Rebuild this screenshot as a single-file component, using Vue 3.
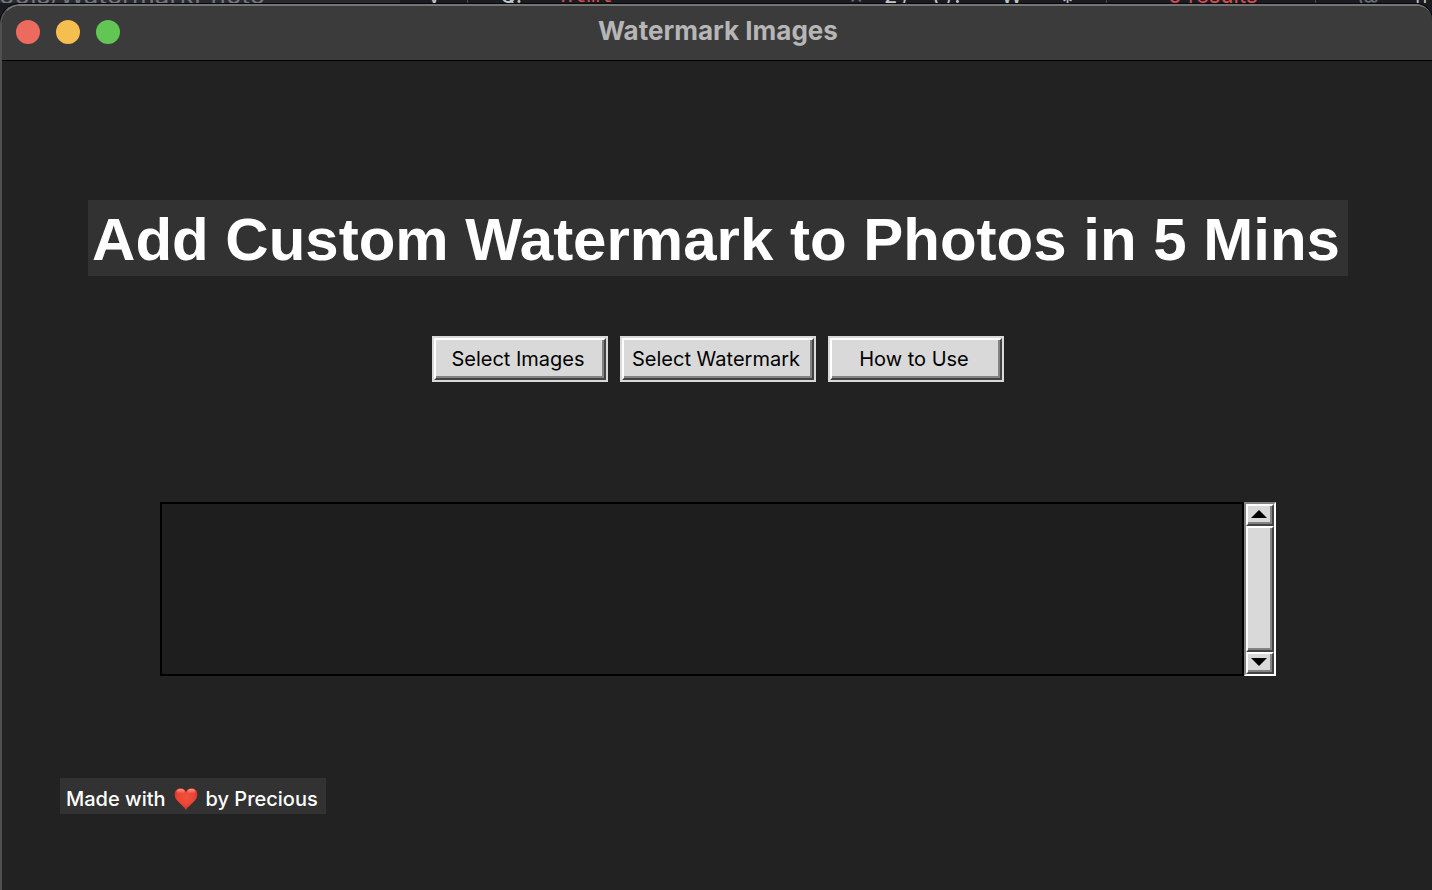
<script setup>
const lights = [
  { name: 'Close', kind: 'close' },
  { name: 'Minimize', kind: 'minimize' },
  { name: 'Zoom', kind: 'zoom' },
]
const actions = [
  { label: 'Select Images', wide: false },
  { label: 'Select Watermark', wide: true },
  { label: 'How to Use', wide: false },
]
</script>

<template>
  <div class="desktop">
    <div class="editor" aria-hidden="true">
      <span class="path">ools/WatermarkPhoto</span>
      <span class="glyph g1">y</span>
      <span class="rule r1"></span>
      <span class="glyph g2">Q.</span>
      <span class="red html">html</span>
      <span class="dim g3">×</span>
      <span class="glyph g4">2</span>
      <span class="glyph g5">/</span>
      <span class="glyph g6">( /:</span>
      <span class="glyph g7">W</span>
      <span class="glyph g8">*</span>
      <span class="rule r2"></span>
      <span class="red results">0 results</span>
      <span class="rule r3"></span>
      <span class="dim g9">@</span>
      <span class="glyph g10">||</span>
    </div>
    <div class="window">
      <header class="titlebar">
        <div class="lights">
          <button v-for="l in lights" :key="l.kind" type="button" class="light" :class="l.kind" :aria-label="l.name"></button>
        </div>
        <div class="title">Watermark Images</div>
      </header>
      <main class="content">
        <h1>Add Custom Watermark to Photos in 5 Mins</h1>
        <div class="actions">
          <button v-for="a in actions" :key="a.label" type="button" class="action" :class="{ wide: a.wide }">
            <span class="face">{{ a.label }}</span>
          </button>
        </div>
        <div class="list">
          <textarea class="files" aria-label="Selected files" readonly></textarea>
          <div class="scrollbar">
            <button type="button" class="arrow" aria-label="Scroll up">
              <svg width="16" height="8" viewBox="0 0 16 8"><path d="M8 0 16 8H0z" /></svg>
            </button>
            <div class="thumb"></div>
            <button type="button" class="arrow" aria-label="Scroll down">
              <svg width="16" height="8" viewBox="0 0 16 8"><path d="M0 0H16L8 8z" /></svg>
            </button>
          </div>
        </div>
        <footer class="credit">
          <span>Made with</span>
          <svg class="heart" role="img" aria-label="love" width="24" height="24" viewBox="0 0 24 24">
            <defs>
              <radialGradient id="heartFill" cx="0.5" cy="0.4" r="0.65">
                <stop offset="0" stop-color="#f2533e" />
                <stop offset="0.6" stop-color="#e94335" />
                <stop offset="1" stop-color="#c92a25" />
              </radialGradient>
              <linearGradient id="heartShine" x1="0" y1="0" x2="0" y2="1">
                <stop offset="0" stop-color="#ffb09a" stop-opacity="0.9" />
                <stop offset="1" stop-color="#ff8069" stop-opacity="0" />
              </linearGradient>
            </defs>
            <path fill="url(#heartFill)" d="M12 23C10.500 20.500 7.500 18 4.800 15.300C2.300 12.800.7 10.500.7 7.400C.7 3.700 3.200 1.300 6.400 1.300C9 1.300 11.100 2.700 12 5C12.900 2.700 15 1.300 17.600 1.300C20.800 1.300 23.300 3.700 23.300 7.400C23.300 10.500 21.700 12.800 19.200 15.300C16.500 18 13.500 20.500 12 23Z" />
            <ellipse cx="6.500" cy="4.500" rx="4" ry="2.500" fill="url(#heartShine)" />
            <ellipse cx="17.500" cy="4.500" rx="4" ry="2.500" fill="url(#heartShine)" />
          </svg>
          <span>by Precious</span>
        </footer>
      </main>
    </div>
  </div>
</template>

<style>
body {
  margin: 0;
  background: #1a1b20;
}
</style>

<style scoped>
.desktop {
  box-sizing: border-box;
  min-height: 100vh;
  position: relative;
  padding-top: 4px;
  display: flex;
  flex-direction: column;
  background: #1b1c21;
  font-family: Inter, "Liberation Sans", sans-serif;
  overflow: hidden;
}
.editor {
  position: absolute;
  inset: 0 0 auto 0;
  height: 3px;
  overflow: hidden;
  font-size: 22px;
  line-height: 20px;
  background: linear-gradient(to right, #282a30 400px, #1b1c21 400px);
}
.editor span {
  position: absolute;
  top: -15px;
  white-space: pre;
}
.path { left: -1px; color: #74767e; font-size: 26px; }
.glyph { color: #c4c5c9; }
.dim { color: #6c6e75; }
.red { color: #d04e50; }
.editor .rule {
  top: 0;
  width: 1px;
  height: 3px;
  background: #4a4b50;
}
.r1 { left: 467px; }
.r2 { left: 1106px; }
.r3 { left: 1315px; }
.g1 { left: 428px; }
.g2 { left: 500px; }
.html { left: 560px; font-family: "DejaVu Sans Mono", monospace; }
.g3 { left: 849px; }
.g4 { left: 884px; }
.g5 { left: 902px; }
.g6 { left: 932px; }
.g7 { left: 1001px; }
.editor .g8 { left: 1062px; top: -8px; }
.r2 { left: 1106px; }
.results { left: 1168px; }
.g9 { left: 1358px; }
.g10 { left: 1414px; }

.window {
  position: relative;
  box-sizing: border-box;
  flex: 1;
  display: flex;
  flex-direction: column;
  border-top: 2px solid #747675;
  border-left: 2px solid #505050;
  border-radius: 20px 16px 0 0;
  background: #222;
  overflow: hidden;
  box-shadow: 0 0 0 1px #08080a;
}
.titlebar {
  display: grid;
  grid-template-columns: 1fr auto 1fr;
  align-items: center;
  height: 54px;
  padding-left: 2px;
  background: #3b3b3c;
  border-bottom: 1px solid #000;
}
.lights {
  display: flex;
  gap: 16px;
  padding: 0 0 2px 12px;
}
.light {
  width: 24px;
  height: 24px;
  padding: 0;
  border: 0;
  border-radius: 50%;
}
.close { background: #ed6a5f; }
.minimize { background: #f5bf50; }
.zoom { background: #62c655; }
.title {
  color: #b6b6b7;
  font-size: 26px;
  font-weight: 700;
  line-height: 32px;
  padding-bottom: 4px;
}
.content {
  flex: 1;
  display: flex;
  flex-direction: column;
  align-items: center;
  padding: 139px 0 76px 2px;
}
h1 {
  box-sizing: border-box;
  margin: 0;
  height: 76px;
  padding: 0 8px 0 4px;
  background: #323232;
  color: #fff;
  font: 700 60px/80px "Liberation Sans", Arial, sans-serif;
  white-space: nowrap;
}
.actions {
  display: flex;
  gap: 12px;
  margin-top: 60px;
}
.action {
  box-sizing: border-box;
  width: 176px;
  height: 46px;
  padding: 0;
  border: 2px solid #d9d9d9;
  background: #d9d9d9;
  color: #000;
  font: 400 20px/24px Inter, "Liberation Sans", sans-serif;
}
.action.wide { width: 196px; }
.face {
  box-sizing: border-box;
  display: flex;
  align-items: center;
  justify-content: center;
  height: 100%;
  padding-right: 4px;
  border: 2px solid;
  border-color: #fff #434343 #434343 #fff;
  box-shadow: inset -2px -2px #828282;
  white-space: nowrap;
}
.list {
  align-self: stretch;
  display: flex;
  height: 174px;
  margin: 120px 156px 0;
}
.files {
  box-sizing: border-box;
  flex: 1;
  margin: 0;
  padding: 4px;
  border: 2px solid #000;
  border-radius: 0;
  outline: 0;
  resize: none;
  background: #1e1e1e;
  color: #fff;
}
.scrollbar {
  box-sizing: border-box;
  width: 32px;
  display: flex;
  flex-direction: column;
  border: 2px solid;
  border-color: #828282 #fff #fff #828282;
  background: #c3c3c3;
}
.arrow,
.thumb {
  box-sizing: border-box;
  border: 2px solid;
  border-color: #fff #434343 #434343 #fff;
  box-shadow: inset -2px -2px #828282;
  background: #d9d9d9;
}
.arrow {
  display: flex;
  align-items: center;
  justify-content: center;
  height: 22px;
  padding: 0 2px 2px 0;
}
.thumb { flex: 1; }
.credit {
  align-self: flex-start;
  box-sizing: border-box;
  display: flex;
  align-items: center;
  gap: 8px;
  height: 36px;
  margin: 102px 0 0 56px;
  padding: 6px 8px 0 6px;
  background: #323232;
  color: #fff;
  font-size: 20px;
  font-weight: 500;
  line-height: 24px;
}
</style>
